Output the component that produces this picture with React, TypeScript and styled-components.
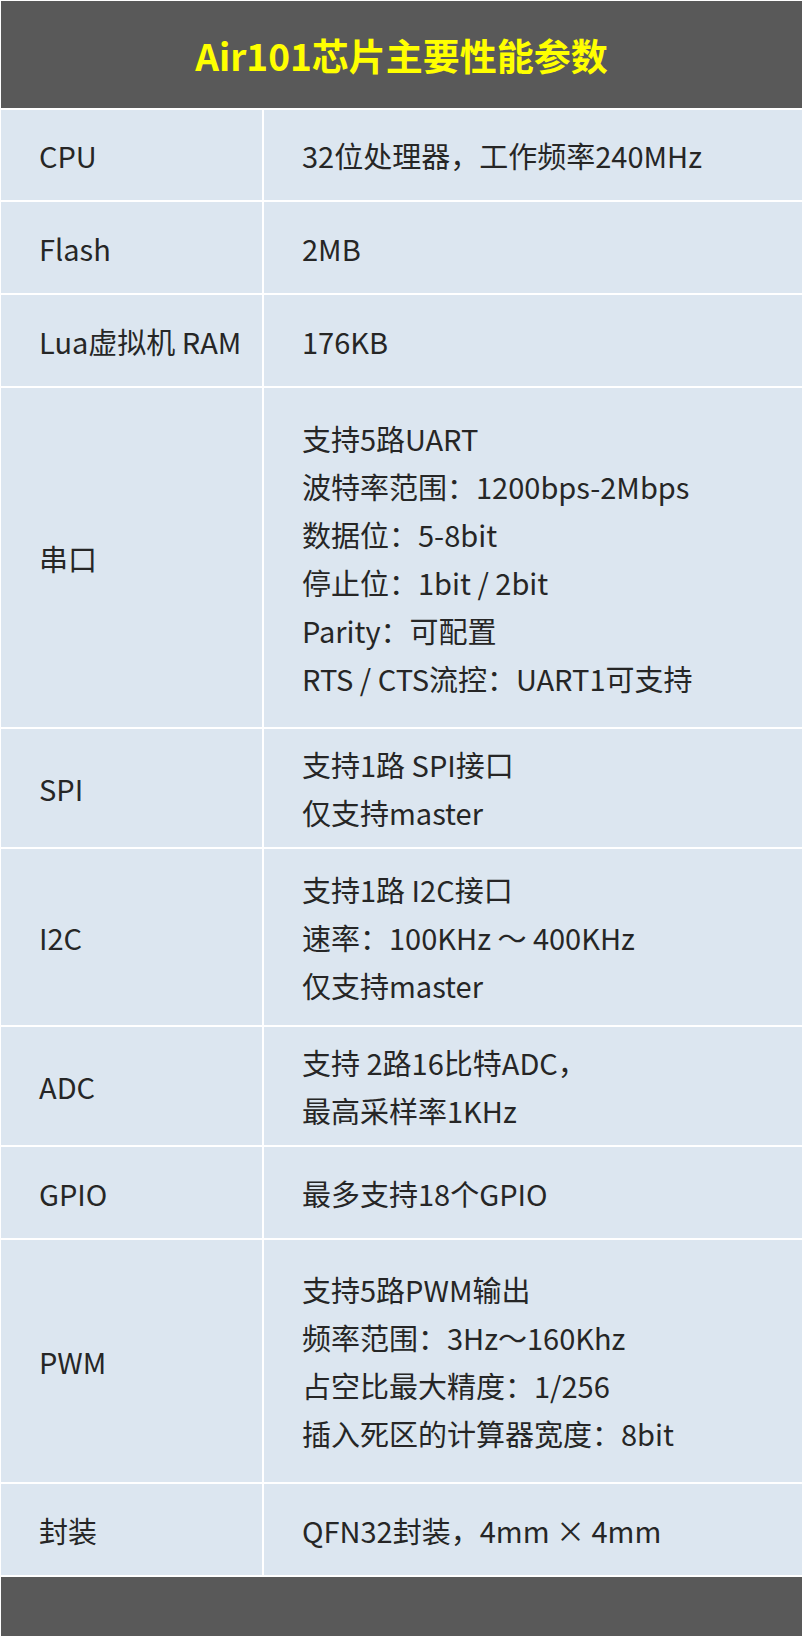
import React from "react";
import styled, { createGlobalStyle } from "styled-components";

interface ISpec {
  name: string;
  lines: string[];
  height: number;
}

const specs: ISpec[] = [
  { name: "CPU", lines: ["32位处理器，工作频率240MHz"], height: 90 },
  { name: "Flash", lines: ["2MB"], height: 91 },
  { name: "Lua虚拟机 RAM", lines: ["176KB"], height: 91 },
  {
    name: "串口",
    lines: [
      "支持5路UART",
      "波特率范围：1200bps-2Mbps",
      "数据位：5-8bit",
      "停止位：1bit / 2bit",
      "Parity：可配置",
      "RTS / CTS流控：UART1可支持",
    ],
    height: 339,
  },
  { name: "SPI", lines: ["支持1路 SPI接口", "仅支持master"], height: 118 },
  {
    name: "I2C",
    lines: ["支持1路 I2C接口", "速率：100KHz ～ 400KHz", "仅支持master"],
    height: 176,
  },
  { name: "ADC", lines: ["支持 2路16比特ADC，", "最高采样率1KHz"], height: 118 },
  { name: "GPIO", lines: ["最多支持18个GPIO"], height: 91 },
  {
    name: "PWM",
    lines: [
      "支持5路PWM输出",
      "频率范围：3Hz～160Khz",
      "占空比最大精度：1/256",
      "插入死区的计算器宽度：8bit",
    ],
    height: 242,
  },
  { name: "封装", lines: ["QFN32封装，4mm × 4mm"], height: 91 },
];

const App = () => {
  return (
    <>
      <GlobalStyle />
      <Sheet>
        <Title>Air101芯片主要性能参数</Title>
        {specs.map((spec: ISpec, key: number) => (
          <Row key={key} h={spec.height}>
            <Cell>{spec.name}</Cell>
            <Cell>
              <div>
                {spec.lines.map((line: string, i: number) => (
                  <Line key={i}>{line}</Line>
                ))}
              </div>
            </Cell>
          </Row>
        ))}
        <Footer />
      </Sheet>
    </>
  );
};

export default App;

const GlobalStyle = createGlobalStyle`
body {
  margin: 0;
  background: #ffffff;
  font-family: "Noto Sans CJK SC", "Noto Sans", sans-serif;
}
`;

const Sheet = styled.div`
width: 804px;
box-sizing: border-box;
padding: 1px 2px 0 1px;
display: flex;
flex-direction: column;
gap: 2px;
background: #ffffff;
`;

const Title = styled.div`
height: 107px;
background: #595959;
color: #ffff00;
font-size: 37px;
font-weight: 700;
display: flex;
align-items: center;
justify-content: center;
`;

const Row = styled.div<{ h: number }>`
height: ${(p) => p.h}px;
display: grid;
grid-template-columns: 261px 1fr;
gap: 2px;
`;

const Cell = styled.div`
background: #dce6f0;
color: #262626;
font-size: 29px;
line-height: 48px;
display: flex;
align-items: center;
padding-left: 38px;
white-space: nowrap;
`;

const Line = styled.div`
line-height: 48px;
`;

const Footer = styled.div`
height: 59px;
background: #595959;
`;
